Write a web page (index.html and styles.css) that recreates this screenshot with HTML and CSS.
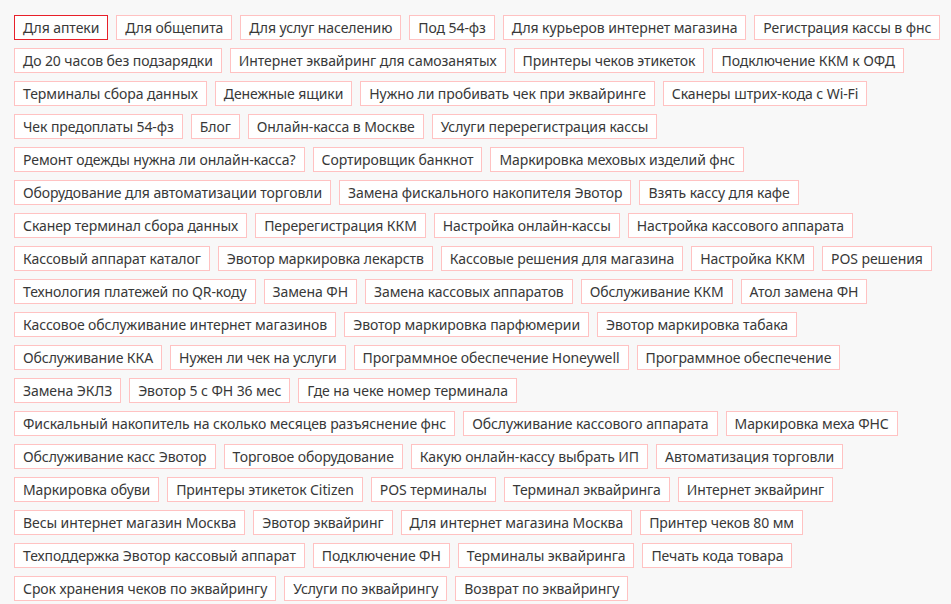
FILE: index.html
```html
<!DOCTYPE html>
<html lang="ru">
<head>
    <meta charset="UTF-8">
    <meta name="viewport" content="width=device-width, initial-scale=1.0">
    <title>Теги</title>
    <link rel="stylesheet" href="styles.css">
</head>
<body>
    <div class="tags">
        <div class="tags-row">
            <a class="tag active" href="#">Для аптеки</a>
            <a class="tag" href="#">Для общепита</a>
            <a class="tag" href="#">Для услуг населению</a>
            <a class="tag" href="#">Под 54-фз</a>
            <a class="tag" href="#">Для курьеров интернет магазина</a>
            <a class="tag" href="#">Регистрация кассы в фнс</a>
        </div>
        <div class="tags-row">
            <a class="tag" href="#">До 20 часов без подзарядки</a>
            <a class="tag" href="#">Интернет эквайринг для самозанятых</a>
            <a class="tag" href="#">Принтеры чеков этикеток</a>
            <a class="tag" href="#">Подключение ККМ к ОФД</a>
        </div>
        <div class="tags-row">
            <a class="tag" href="#">Терминалы сбора данных</a>
            <a class="tag" href="#">Денежные ящики</a>
            <a class="tag" href="#">Нужно ли пробивать чек при эквайринге</a>
            <a class="tag" href="#">Сканеры штрих-кода с Wi-Fi</a>
        </div>
        <div class="tags-row">
            <a class="tag" href="#">Чек предоплаты 54-фз</a>
            <a class="tag" href="#">Блог</a>
            <a class="tag" href="#">Онлайн-касса в Москве</a>
            <a class="tag" href="#">Услуги перерегистрация кассы</a>
        </div>
        <div class="tags-row">
            <a class="tag" href="#">Ремонт одежды нужна ли онлайн-касса?</a>
            <a class="tag" href="#">Сортировщик банкнот</a>
            <a class="tag" href="#">Маркировка меховых изделий фнс</a>
        </div>
        <div class="tags-row">
            <a class="tag" href="#">Оборудование для автоматизации торговли</a>
            <a class="tag" href="#">Замена фискального накопителя Эвотор</a>
            <a class="tag" href="#">Взять кассу для кафе</a>
        </div>
        <div class="tags-row">
            <a class="tag" href="#">Сканер терминал сбора данных</a>
            <a class="tag" href="#">Перерегистрация ККМ</a>
            <a class="tag" href="#">Настройка онлайн-кассы</a>
            <a class="tag" href="#">Настройка кассового аппарата</a>
        </div>
        <div class="tags-row">
            <a class="tag" href="#">Кассовый аппарат каталог</a>
            <a class="tag" href="#">Эвотор маркировка лекарств</a>
            <a class="tag" href="#">Кассовые решения для магазина</a>
            <a class="tag" href="#">Настройка ККМ</a>
            <a class="tag" href="#">POS решения</a>
        </div>
        <div class="tags-row">
            <a class="tag" href="#">Технология платежей по QR-коду</a>
            <a class="tag" href="#">Замена ФН</a>
            <a class="tag" href="#">Замена кассовых аппаратов</a>
            <a class="tag" href="#">Обслуживание ККМ</a>
            <a class="tag" href="#">Атол замена ФН</a>
        </div>
        <div class="tags-row">
            <a class="tag" href="#">Кассовое обслуживание интернет магазинов</a>
            <a class="tag" href="#">Эвотор маркировка парфюмерии</a>
            <a class="tag" href="#">Эвотор маркировка табака</a>
        </div>
        <div class="tags-row">
            <a class="tag" href="#">Обслуживание ККА</a>
            <a class="tag" href="#">Нужен ли чек на услуги</a>
            <a class="tag" href="#">Программное обеспечение Honeywell</a>
            <a class="tag" href="#">Программное обеспечение</a>
        </div>
        <div class="tags-row">
            <a class="tag" href="#">Замена ЭКЛЗ</a>
            <a class="tag" href="#">Эвотор 5 с ФН 36 мес</a>
            <a class="tag" href="#">Где на чеке номер терминала</a>
        </div>
        <div class="tags-row">
            <a class="tag" href="#">Фискальный накопитель на сколько месяцев разъяснение фнс</a>
            <a class="tag" href="#">Обслуживание кассового аппарата</a>
            <a class="tag" href="#">Маркировка меха ФНС</a>
        </div>
        <div class="tags-row">
            <a class="tag" href="#">Обслуживание касс Эвотор</a>
            <a class="tag" href="#">Торговое оборудование</a>
            <a class="tag" href="#">Какую онлайн-кассу выбрать ИП</a>
            <a class="tag" href="#">Автоматизация торговли</a>
        </div>
        <div class="tags-row">
            <a class="tag" href="#">Маркировка обуви</a>
            <a class="tag" href="#">Принтеры этикеток Citizen</a>
            <a class="tag" href="#">POS терминалы</a>
            <a class="tag" href="#">Терминал эквайринга</a>
            <a class="tag" href="#">Интернет эквайринг</a>
        </div>
        <div class="tags-row">
            <a class="tag" href="#">Весы интернет магазин Москва</a>
            <a class="tag" href="#">Эвотор эквайринг</a>
            <a class="tag" href="#">Для интернет магазина Москва</a>
            <a class="tag" href="#">Принтер чеков 80 мм</a>
        </div>
        <div class="tags-row">
            <a class="tag" href="#">Техподдержка Эвотор кассовый аппарат</a>
            <a class="tag" href="#">Подключение ФН</a>
            <a class="tag" href="#">Терминалы эквайринга</a>
            <a class="tag" href="#">Печать кода товара</a>
        </div>
        <div class="tags-row">
            <a class="tag" href="#">Срок хранения чеков по эквайрингу</a>
            <a class="tag" href="#">Услуги по эквайрингу</a>
            <a class="tag" href="#">Возврат по эквайрингу</a>
        </div>
    </div>
</body>
</html>
```

FILE: styles.css
```css
html, body {
    margin: 0;
    padding: 0;
    background: #f8f8f8;
}
.tags {
    display: flex;
    flex-direction: column;
    gap: 8px;
    padding: 15px 14px;
    font-family: "Noto Sans", "Open Sans", sans-serif;
    font-size: 14px;
    letter-spacing: -0.08px;
}
.tags-row {
    display: flex;
    gap: 8px;
}
.tag {
    display: block;
    height: 23px;
    line-height: 23px;
    padding: 0 8px;
    border: 1px solid #ffc2c2;
    background: #fff;
    color: #383838;
    text-decoration: none;
    white-space: nowrap;
}
.tag.active {
    border-color: #e8202a;
}
```
